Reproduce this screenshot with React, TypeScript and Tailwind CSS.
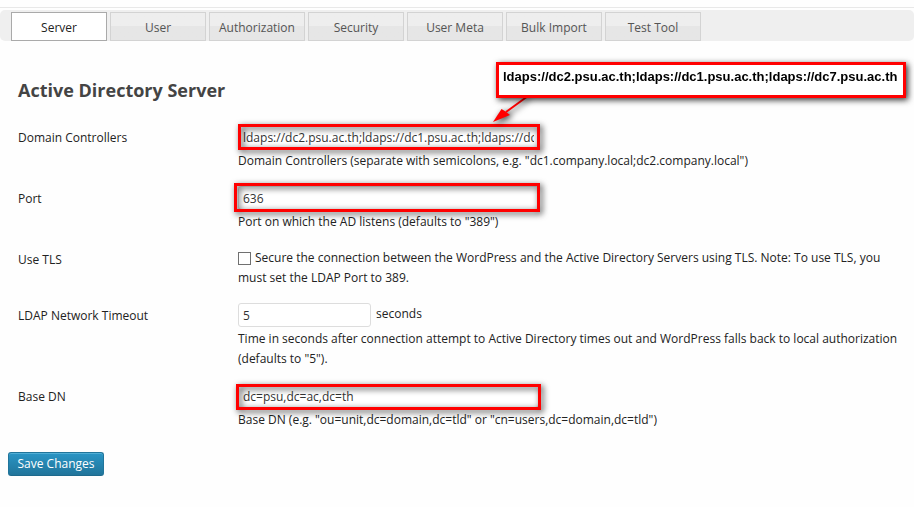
import { useState } from 'react';
import type { ReactNode } from 'react';
import clsx from 'clsx';

const tabs = ['Server', 'User', 'Authorization', 'Security', 'User Meta', 'Bulk Import', 'Test Tool'];

const controllers = 'ldaps://dc2.psu.ac.th;ldaps://dc1.psu.ac.th;ldaps://dc7.psu.ac.th';

const frameShadow = 'drop-shadow-[2px_2px_3px_rgba(0,0,0,0.8)]';

interface RowProps {
  id: string;
  label: string;
  children: ReactNode;
}

function Row({ id, label, children }: RowProps) {
  return (
    <div className="grid grid-cols-[220px_1fr]">
      <label htmlFor={id} className="pt-[3px]">
        {label}
      </label>
      <div>{children}</div>
    </div>
  );
}

interface TextFieldProps {
  id: string;
  value: string;
  className?: string;
  onChange: (value: string) => void;
}

function TextField({ id, value, className, onChange }: TextFieldProps) {
  return (
    <input
      id={id}
      type="text"
      value={value}
      onChange={(e) => onChange(e.target.value)}
      className={clsx('block h-6 rounded-[3px] border border-[#ddd] bg-white px-1 text-[#333] outline-none', className)}
    />
  );
}

// Red marker box drawn over a field
function Highlight({ className }: { className: string }) {
  return <div className={clsx('pointer-events-none absolute border-3 border-[#f00]', frameShadow, className)} />;
}

function Callout({ text }: { text: string }) {
  return (
    <>
      <svg
        className={clsx('absolute -top-[31px] left-[252px]', frameShadow)}
        width="44"
        height="32"
        viewBox="0 0 44 32"
        aria-hidden="true"
      >
        <path d="M38 2 L16 18" stroke="#f00" strokeWidth="2" />
        <path d="M3 28 L11.500 15 L15.500 17.500 L20 21 Z" fill="#f00" />
      </svg>
      <div
        className={clsx(
          'absolute -top-[63px] left-[258px] h-9 w-[410px] border-3 border-[#f00] bg-white px-1 font-["Liberation_Sans",sans-serif] text-[13px] leading-6 font-bold whitespace-nowrap text-black',
          frameShadow
        )}
      >
        {text}
      </div>
    </>
  );
}

export default function App() {
  const [activeTab, setActiveTab] = useState('Server');
  const [domain, setDomain] = useState(controllers);
  const [port, setPort] = useState('636');
  const [useTls, setUseTls] = useState(false);
  const [timeout, setTimeoutValue] = useState('5');
  const [baseDn, setBaseDn] = useState('dc=psu,dc=ac,dc=th');

  return (
    <div className='min-h-screen overflow-x-hidden bg-[#fefefe] pt-[7px] pb-6 font-["Open_Sans",sans-serif] text-xs text-[#222]'>
      <hr className="border-[#e8e8e8]" />

      {/* Tabs */}
      <nav className="mt-0.5 flex gap-[3px] rounded-[5px] bg-[#efefef] pt-0.5 pl-[11px]">
        {tabs.map((tab) => (
          <a
            key={tab}
            href="#"
            onClick={() => setActiveTab(tab)}
            className={clsx(
              'h-[29px] w-24 border text-center leading-[29px]',
              tab === activeTab
                ? 'border-[#aaa] bg-white text-[#222]'
                : 'border-[#d3d3d3] bg-linear-to-b from-[#eee] from-50% to-[#e6e6e6] to-50% text-[#555]'
            )}
          >
            {tab}
          </a>
        ))}
      </nav>

      <form onSubmit={(e) => e.preventDefault()}>
        <div className="pt-[37px] pr-2 pl-[18px]">
          <h3 className="text-lg leading-6 font-bold text-[#444]">Active Directory Server</h3>

          <div className="mt-[23px] flex flex-col gap-[15px] leading-5">
            <Row id="domain" label="Domain Controllers">
              <div className="relative">
                <TextField id="domain" value={domain} onChange={setDomain} className="w-[301px]" />
                <Highlight className="-top-px left-0 h-[26px] w-[302px]" />
                <Callout text={controllers} />
              </div>
              <p className="pt-0.5">
                Domain Controllers (separate with semicolons, e.g. "dc1.company.local;dc2.company.local")
              </p>
            </Row>

            <Row id="port" label="Port">
              <div className="relative">
                <TextField id="port" value={port} onChange={setPort} className="w-[301px]" />
                <Highlight className="-top-[3px] -left-1 h-[29px] w-[306px]" />
              </div>
              <p className="pt-0.5">Port on which the AD listens (defaults to "389")</p>
            </Row>

            <Row id="tls" label="Use TLS">
              <p className="pt-px pr-4">
                <input
                  id="tls"
                  type="checkbox"
                  checked={useTls}
                  onChange={(e) => setUseTls(e.target.checked)}
                  className="mr-1 size-[13px] appearance-none border border-[#707070] bg-white align-middle checked:bg-[#2a95c5]"
                />
                Secure the connection between the WordPress and the Active Directory Servers using TLS. Note: To use
                TLS, you must set the LDAP Port to 389.
              </p>
            </Row>

            <Row id="timeout" label="LDAP Network Timeout">
              <div className="flex gap-[5px]">
                <TextField id="timeout" value={timeout} onChange={setTimeoutValue} className="w-[133px]" />
                <span className="pt-px">seconds</span>
              </div>
              <p className="pt-0.5">
                Time in seconds after connection attempt to Active Directory times out and WordPress falls back to local
                authorization (defaults to "5").
              </p>
            </Row>

            <Row id="basedn" label="Base DN">
              <div className="relative">
                <TextField id="basedn" value={baseDn} onChange={setBaseDn} className="w-[301px]" />
                <Highlight className="top-0 -left-0.5 h-[26px] w-[305px]" />
              </div>
              <p className="pt-0.5">Base DN (e.g. "ou=unit,dc=domain,dc=tld" or "cn=users,dc=domain,dc=tld")</p>
            </Row>
          </div>
        </div>

        <button
          type="submit"
          className="mt-[22px] ml-2 h-6 w-24 rounded-[3px] border border-[#21759b] border-b-[#1e6a8d] bg-linear-to-b from-[#2a95c5] to-[#21759b] text-white shadow-[inset_0_1px_0_rgba(120,200,230,0.5)]"
        >
          Save Changes
        </button>
      </form>
    </div>
  );
}
